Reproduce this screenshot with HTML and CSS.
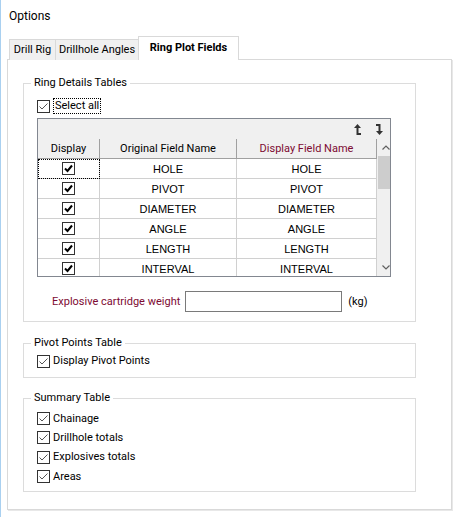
FILE: index.html
```html
<!DOCTYPE html>
<html>
<head>
<meta charset="utf-8">
<link rel="stylesheet" href="styles.css">
</head>
<body>
<div class="window">
  <div class="title">Options</div>
  <div class="tabs">
    <div class="tab t1">Drill Rig</div>
    <div class="tab t2">Drillhole Angles</div>
    <div class="tab active">Ring Plot Fields</div>
  </div>
  <div class="panel">
    <fieldset class="group g1">
      <legend>Ring Details Tables</legend>
      <label class="chk">
        <svg class="box" width="13" height="13" viewBox="0 0 13 13"><rect x="0.5" y="0.5" width="12" height="12" fill="#fff" stroke="#333"/><polyline points="2.5,6.5 5,9 10.5,3.5" fill="none" stroke="#555" stroke-width="1"/></svg>
        <span class="text focus">Select all</span>
      </label>
      <div class="grid">
        <div class="toolbar">
          <svg width="7" height="11" viewBox="0 0 7 11"><path d="M3.5 0 L7 4 L4.5 4 L4.5 9 L7 9 L7 11 L2.5 11 L2.5 4 L0 4 Z" fill="#333"/></svg>
          <svg width="7" height="11" viewBox="0 0 7 11"><path d="M0 0 L4.5 0 L4.5 7 L7 7 L3.5 11 L0 7 L2.5 7 L2.5 2 L0 2 Z" fill="#333"/></svg>
        </div>
        <div class="gbody">
          <table class="tbl">
            <thead>
              <tr><th class="c1">Display</th><th class="c2">Original Field Name</th><th class="c3 red">Display Field Name</th></tr>
            </thead>
            <tbody>
              <tr><td class="c1 cur"><svg class="gchk" width="13" height="13" viewBox="0 0 13 13"><rect x="0.5" y="0.5" width="12" height="12" fill="#fff" stroke="#333"/><path d="M3 6.5 L5.5 9 L10 3.5" fill="none" stroke="#000" stroke-width="2"/></svg></td><td>HOLE</td><td>HOLE</td></tr>
              <tr><td class="c1"><svg class="gchk" width="13" height="13" viewBox="0 0 13 13"><rect x="0.5" y="0.5" width="12" height="12" fill="#fff" stroke="#333"/><path d="M3 6.5 L5.5 9 L10 3.5" fill="none" stroke="#000" stroke-width="2"/></svg></td><td>PIVOT</td><td>PIVOT</td></tr>
              <tr><td class="c1"><svg class="gchk" width="13" height="13" viewBox="0 0 13 13"><rect x="0.5" y="0.5" width="12" height="12" fill="#fff" stroke="#333"/><path d="M3 6.5 L5.5 9 L10 3.5" fill="none" stroke="#000" stroke-width="2"/></svg></td><td>DIAMETER</td><td>DIAMETER</td></tr>
              <tr><td class="c1"><svg class="gchk" width="13" height="13" viewBox="0 0 13 13"><rect x="0.5" y="0.5" width="12" height="12" fill="#fff" stroke="#333"/><path d="M3 6.5 L5.5 9 L10 3.5" fill="none" stroke="#000" stroke-width="2"/></svg></td><td>ANGLE</td><td>ANGLE</td></tr>
              <tr><td class="c1"><svg class="gchk" width="13" height="13" viewBox="0 0 13 13"><rect x="0.5" y="0.5" width="12" height="12" fill="#fff" stroke="#333"/><path d="M3 6.5 L5.5 9 L10 3.5" fill="none" stroke="#000" stroke-width="2"/></svg></td><td>LENGTH</td><td>LENGTH</td></tr>
              <tr><td class="c1"><svg class="gchk" width="13" height="13" viewBox="0 0 13 13"><rect x="0.5" y="0.5" width="12" height="12" fill="#fff" stroke="#333"/><path d="M3 6.5 L5.5 9 L10 3.5" fill="none" stroke="#000" stroke-width="2"/></svg></td><td>INTERVAL</td><td>INTERVAL</td></tr>
            </tbody>
          </table>
          <div class="vscroll">
            <div class="sarrow"><svg width="8" height="5" viewBox="0 0 8 5"><polyline points="0.5,4.5 4,1 7.5,4.5" fill="none" stroke="#606060" stroke-width="1.2"/></svg></div>
            <div class="track"><div class="thumb"></div></div>
            <div class="sarrow"><svg width="8" height="5" viewBox="0 0 8 5"><polyline points="0.5,0.5 4,4 7.5,0.5" fill="none" stroke="#606060" stroke-width="1.2"/></svg></div>
          </div>
        </div>
      </div>
      <div class="weight">
        <span class="wlabel">Explosive cartridge weight</span>
        <span class="input"></span>
        <span class="unit">(kg)</span>
      </div>
    </fieldset>

    <fieldset class="group g2">
      <legend>Pivot Points Table</legend>
      <label class="chk">
        <svg class="box" width="13" height="13" viewBox="0 0 13 13"><rect x="0.5" y="0.5" width="12" height="12" fill="#fff" stroke="#333"/><polyline points="2.5,6.5 5,9 10.5,3.5" fill="none" stroke="#555" stroke-width="1"/></svg>
        <span class="text">Display Pivot Points</span>
      </label>
    </fieldset>

    <fieldset class="group g3">
      <legend>Summary Table</legend>
      <label class="chk row">
        <svg class="box" width="13" height="13" viewBox="0 0 13 13"><rect x="0.5" y="0.5" width="12" height="12" fill="#fff" stroke="#333"/><polyline points="2.5,6.5 5,9 10.5,3.5" fill="none" stroke="#555" stroke-width="1"/></svg>
        <span class="text">Chainage</span>
      </label>
      <label class="chk row">
        <svg class="box" width="13" height="13" viewBox="0 0 13 13"><rect x="0.5" y="0.5" width="12" height="12" fill="#fff" stroke="#333"/><polyline points="2.5,6.5 5,9 10.5,3.5" fill="none" stroke="#555" stroke-width="1"/></svg>
        <span class="text">Drillhole totals</span>
      </label>
      <label class="chk row">
        <svg class="box" width="13" height="13" viewBox="0 0 13 13"><rect x="0.5" y="0.5" width="12" height="12" fill="#fff" stroke="#333"/><polyline points="2.5,6.5 5,9 10.5,3.5" fill="none" stroke="#555" stroke-width="1"/></svg>
        <span class="text">Explosives totals</span>
      </label>
      <label class="chk row">
        <svg class="box" width="13" height="13" viewBox="0 0 13 13"><rect x="0.5" y="0.5" width="12" height="12" fill="#fff" stroke="#333"/><polyline points="2.5,6.5 5,9 10.5,3.5" fill="none" stroke="#555" stroke-width="1"/></svg>
        <span class="text">Areas</span>
      </label>
    </fieldset>
  </div>
</div>
</body>
</html>
```

FILE: styles.css
```css
html, body {
  margin: 0;
  padding: 0;
  background: #fff;
}
body {
  font-family: Roboto, "Noto Sans", sans-serif;
  font-size: 11px;
  color: #000;
}
.window {
  width: 458px;
  height: 517px;
  border-left: 1px solid #a9d0f0;
  box-sizing: border-box;
  overflow: hidden;
}
.title {
  height: 32px;
  line-height: 32px;
  padding-left: 8px;
  font-size: 12px;
}
.tabs {
  display: flex;
  align-items: flex-end;
  margin-top: 5px;
  margin-left: 8px;
  height: 23px;
  position: relative;
  z-index: 1;
  margin-bottom: -1px;
}
.tab {
  height: 21px;
  line-height: 20px;
  box-sizing: border-box;
  border: 1px solid #d9d9d9;
  border-bottom: none;
  background: #f0f0f0;
  text-align: center;
  white-space: nowrap;
}
.t1 { width: 47px; }
.t2 { width: 84px; margin-left: -1px; }
.tab.active {
  width: 101px;
  height: 24px;
  line-height: 22px;
  margin-left: -1px;
  background: #fff;
  font-weight: bold;
}
.panel {
  margin-left: 6px;
  width: 445px;
  height: 451px;
  box-sizing: border-box;
  border: 1px solid #d9d9d9;
  box-shadow: 1px 1px 0 #e8e8e8;
  background: #fff;
  padding: 15px 0 0 15px;
}
.group {
  margin: 0;
  width: 393px;
  box-sizing: border-box;
  border: 1px solid #dcdcdc;
  padding: 0 0 0 13px;
}
.group legend {
  padding: 0 3px;
  margin-left: -6px;
  line-height: 16px;
  height: 16px;
}
.chk {
  display: flex;
  align-items: center;
  height: 16px;
}
.chk .box {
  flex: none;
  display: block;
}
.chk .text {
  margin-left: 3px;
  line-height: 14px;
}
.chk .focus {
  margin-left: 4px;
  padding: 0 1px;
  outline: 1px dotted #000;
  outline-offset: 0;
}
.g1 { padding-top: 7px; padding-bottom: 9px; }
.grid {
  margin-top: 4px;
  width: 354px;
  height: 159px;
  box-sizing: border-box;
  border: 1px solid #828790;
  background: #fff;
  display: flex;
  flex-direction: column;
  overflow: hidden;
}
.toolbar {
  height: 20px;
  flex: none;
  background: #f0f0f0;
  display: flex;
  justify-content: flex-end;
  align-items: center;
  gap: 15px;
  padding-right: 7px;
}
.gbody {
  display: flex;
  flex: 1;
  min-height: 0;
}
.tbl {
  border-collapse: collapse;
  table-layout: fixed;
  width: 336px;
  font-family: "Liberation Sans", Arial, sans-serif;
  font-size: 11px;
  align-self: flex-start;
}
.tbl th {
  height: 19px;
  background: #f0f0f0;
  font-weight: normal;
  font-family: Roboto, "Noto Sans", sans-serif;
  font-size: 11px;
  border: 1px solid #a0a0a0;
  border-top: none;
  padding: 0;
  color: #000;
}
.tbl th.c1 { border-left: none; }
.tbl th.red { color: #7d0a32; }
.tbl td {
  height: 19px;
  border: 1px solid #d0d0d0;
  text-align: center;
  padding: 0;
}
.tbl td.c1 { border-left: none; }
.tbl td.cur { outline: 1px dotted #000; outline-offset: -1px; }
.c1 { width: 61px; }
.c2 { width: 136px; }
.c3 { width: 139px; }
.gchk {
  display: inline-block;
  vertical-align: middle;
}
.vscroll {
  width: 17px;
  flex: none;
  background: #f0f0f0;
  display: flex;
  flex-direction: column;
}
.sarrow {
  height: 17px;
  display: flex;
  align-items: center;
  justify-content: center;
  flex: none;
}
.track {
  flex: 1;
  padding: 0 1px;
}
.thumb {
  height: 33px;
  background: #cdcdcd;
}
.weight {
  display: flex;
  align-items: center;
  margin-top: 14px;
  margin-left: 15px;
}
.wlabel { color: #7d0a32; }
.input {
  display: block;
  width: 157px;
  height: 21px;
  box-sizing: border-box;
  border: 1px solid #7a7a7a;
  margin-left: 5px;
}
.unit { margin-left: 6px; }
.g2 {
  margin-top: 13px;
  padding-top: 2px;
  padding-bottom: 8px;
}
.g3 {
  margin-top: 12px;
  padding-top: 3px;
  padding-bottom: 5px;
}
.g3 .row { height: 19px; }
.g3 .row:nth-child(4) { height: 20px; }
```
